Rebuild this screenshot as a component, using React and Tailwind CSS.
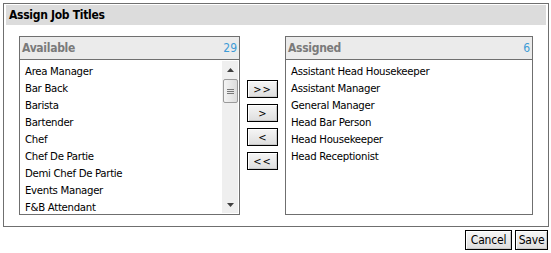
import React from "react";

const available = [
  "Area Manager",
  "Bar Back",
  "Barista",
  "Bartender",
  "Chef",
  "Chef De Partie",
  "Demi Chef De Partie",
  "Events Manager",
  "F&B Attendant",
];
const assigned = [
  "Assistant Head Housekeeper",
  "Assistant Manager",
  "General Manager",
  "Head Bar Person",
  "Head Housekeeper",
  "Head Receptionist",
];

const font = { fontFamily: '"DejaVu Sans Condensed", "DejaVu Sans", sans-serif' };

function Btn({ children, className = "" }) {
  return (
    <button
      className={
        "h-[18px] border border-black bg-gradient-to-b from-[#f6f6f6] to-[#dedede] shadow-[inset_1px_1px_0_#ffffff,inset_-1px_-1px_0_#c8c8c8] leading-none text-black flex items-center justify-center " +
        className
      }
    >
      {children}
    </button>
  );
}

function ListBox({ title, count, items, scroll, width }) {
  return (
    <div className={"flex flex-col border border-[#6f6f6f] bg-white h-[179px] " + width}>
      <div className="h-[23px] shrink-0 bg-[#ebebeb] border-b border-[#6f6f6f] flex items-center justify-between pl-[2px] pr-[2px]">
        <span className="text-[12px] font-bold text-[#7a7a7a] tracking-[-0.3px]">{title}</span>
        <span className="text-[12px] text-[#3d9bd6]">{count}</span>
      </div>
      <div className="flex-1 flex min-h-0">
        <div className="flex-1 pl-[5px] pt-[3px] overflow-hidden">
          {items.map((t) => (
            <div
              key={t}
              className="h-[17px] flex items-center leading-none text-[11.3px] tracking-[-0.3px] text-black whitespace-nowrap"
            >
              {t}
            </div>
          ))}
        </div>
        {scroll && (
          <div className="w-[16px] mr-[1px] my-[1px] bg-[#efefef] flex flex-col items-center">
            <div className="h-[18px] w-full flex items-center justify-center">
              <svg width="7" height="4" viewBox="0 0 7 4">
                <path d="M0 4 L3.5 0 L7 4 Z" fill="#404040" />
              </svg>
            </div>
            <div className="w-[15px] h-[24px] rounded-[2px] border border-[#9a9a9a] bg-gradient-to-r from-[#f4f4f4] to-[#dcdcdc] flex flex-col items-center justify-center gap-[1px]">
              <div className="w-[7px] h-px bg-[#777]" />
              <div className="w-[7px] h-px bg-[#777]" />
              <div className="w-[7px] h-px bg-[#777]" />
            </div>
            <div className="flex-1" />
            <div className="h-[17px] w-full flex items-center justify-center">
              <svg width="7" height="4" viewBox="0 0 7 4">
                <path d="M0 0 L3.5 4 L7 0 Z" fill="#404040" />
              </svg>
            </div>
          </div>
        )}
      </div>
    </div>
  );
}

export default function App() {
  return (
    <div className="w-[551px] h-[253px] bg-white relative" style={font}>
      <div className="ml-[3px] mt-[3px] w-[546px] h-[224px] border border-[#6f6f6f] px-[2px] pt-[1px]">
        <div className="h-[20px] bg-[#dcdcdc] flex items-center pl-[3px]">
          <span className="text-[12px] font-bold text-black tracking-[-0.3px]">Assign Job Titles</span>
        </div>
        <div className="flex pl-[13px] pt-[11px] gap-[7px]">
          <ListBox title="Available" count="29" items={available} scroll width="w-[221px]" />
          <div className="flex flex-col gap-[6px] pt-[44px]">
            <Btn className="w-[31px] text-[11px] tracking-[1px]">&gt;&gt;</Btn>
            <Btn className="w-[31px] text-[11px]">&gt;</Btn>
            <Btn className="w-[31px] text-[11px]">&lt;</Btn>
            <Btn className="w-[31px] text-[11px] tracking-[1px]">&lt;&lt;</Btn>
          </div>
          <ListBox title="Assigned" count="6" items={assigned} width="w-[248px]" />
        </div>
      </div>
      <div className="flex justify-end gap-[3px] pr-[3px] pt-[3px]">
        <Btn className="w-[47px] h-[20px] text-[12px] tracking-[-0.2px]">Cancel</Btn>
        <Btn className="w-[33px] h-[20px] text-[12px] tracking-[-0.2px]">Save</Btn>
      </div>
    </div>
  );
}
